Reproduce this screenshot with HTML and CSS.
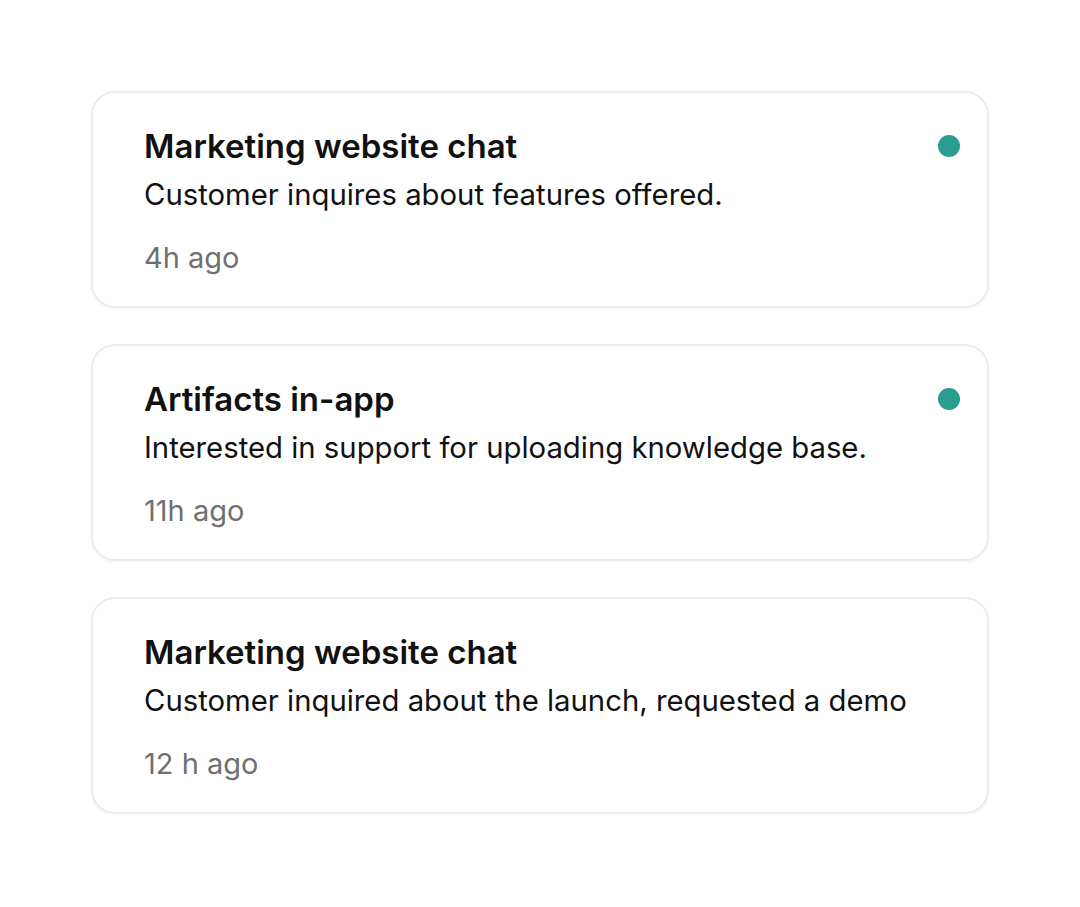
FILE: index.html
```html
<!DOCTYPE html>
<html>
<head>
<meta charset="utf-8">
<link rel="stylesheet" href="styles.css">
</head>
<body>
<main class="list">
  <article class="card">
    <div class="body">
      <h2 class="title">Marketing website chat</h2>
      <p class="desc">Customer inquires about features offered.</p>
      <p class="time">4h ago</p>
    </div>
    <span class="dot"></span>
  </article>
  <article class="card">
    <div class="body">
      <h2 class="title">Artifacts in-app</h2>
      <p class="desc">Interested in support for uploading knowledge base.</p>
      <p class="time">11h ago</p>
    </div>
    <span class="dot"></span>
  </article>
  <article class="card">
    <div class="body">
      <h2 class="title">Marketing website chat</h2>
      <p class="desc">Customer inquired about the launch, requested a demo</p>
      <p class="time">12 h ago</p>
    </div>
  </article>
</main>
</body>
</html>
```
FILE: styles.css
```css
html, body {
  margin: 0;
  padding: 0;
  background: #ffffff;
}
body {
  font-family: Inter, "Noto Sans", sans-serif;
  color: #111111;
}
.list {
  display: flex;
  flex-direction: column;
  gap: 36px;
  padding: 91px 0 0 91px;
  width: 898px;
}
.card {
  box-sizing: border-box;
  height: 217px;
  border: 2px solid #ececec;
  border-radius: 24px;
  box-shadow: 0 2px 3px rgba(0,0,0,0.04);
  display: flex;
  justify-content: space-between;
  align-items: flex-start;
  padding: 32px 27px 27px 51px;
}
.body {
  display: flex;
  flex-direction: column;
}
.title {
  margin: 0;
  font-size: 33px;
  line-height: 42px;
  font-weight: 600;
  letter-spacing: 0;
}
.desc {
  margin: 8px 0 0;
  font-size: 29.3px;
  line-height: 40px;
  font-weight: 400;
}
.time {
  margin: 23px 0 0;
  font-size: 29px;
  line-height: 40px;
  color: #707070;
}
.dot {
  width: 22px;
  height: 22px;
  border-radius: 50%;
  background: #2a9d8f;
  margin-top: 10px;
}
```
